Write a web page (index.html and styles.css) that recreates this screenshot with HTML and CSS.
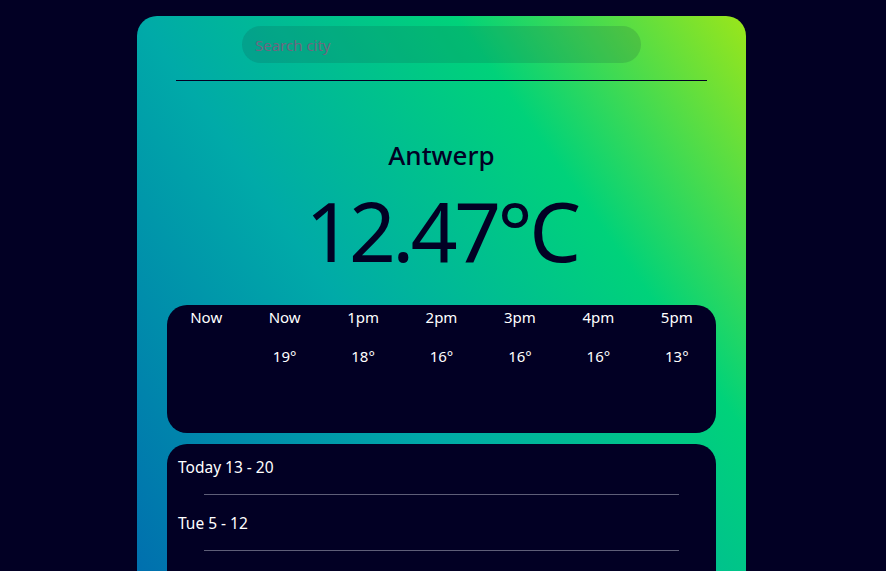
FILE: index.html
```html
<!DOCTYPE html>
<html>
<head>
<meta charset="utf-8">
<link rel="stylesheet" href="styles.css">
</head>
<body>
<main class="card">
  <div class="search-wrap"><input class="search" type="text" placeholder="Search city"></div>
  <hr class="divider">
  <section class="current">
    <h1 class="city">Antwerp</h1>
    <div class="temp">12.47°C</div>
  </section>
  <section class="hourly">
    <div class="hour"><span class="h-label">Now</span><span class="h-temp"></span></div>
    <div class="hour"><span class="h-label">Now</span><span class="h-temp">19°</span></div>
    <div class="hour"><span class="h-label">1pm</span><span class="h-temp">18°</span></div>
    <div class="hour"><span class="h-label">2pm</span><span class="h-temp">16°</span></div>
    <div class="hour"><span class="h-label">3pm</span><span class="h-temp">16°</span></div>
    <div class="hour"><span class="h-label">4pm</span><span class="h-temp">16°</span></div>
    <div class="hour"><span class="h-label">5pm</span><span class="h-temp">13°</span></div>
  </section>
  <section class="daily">
    <div class="day">Today 13 - 20</div>
    <hr class="day-sep">
    <div class="day">Tue 5 - 12</div>
    <hr class="day-sep">
  </section>
</main>
</body>
</html>
```
FILE: styles.css
```css
html, body { margin: 0; padding: 0; }
body {
  background: #020024;
  font-family: "Noto Sans", "Open Sans", sans-serif;
  height: 571px;
  overflow: hidden;
}
.card {
  width: 609px;
  margin: 16px 0 0 137px;
  height: 800px;
  border-radius: 20px;
  background: linear-gradient(55deg, #0070ae 15%, #00aaa8 48%, #00d27a 75%, #9be61a 100%);
  padding: 10px 30px 0;
  box-sizing: border-box;
}
.search-wrap { display: flex; justify-content: center; }
.search {
  width: 399px;
  height: 37px;
  border: none;
  border-radius: 19px;
  background: rgba(20, 60, 60, 0.16);
  padding: 0 13px;
  box-sizing: border-box;
  font-family: inherit;
  font-size: 15px;
  color: #6a5a7a;
  outline: none;
}
.search::placeholder { color: #7b6080; opacity: 0.9; }
.divider {
  margin: 17px 9px 0;
  border: none;
  border-top: 1px solid #020024;
  height: 0;
}
.current { text-align: center; color: #020024; padding-top: 56px; }
.city { margin: 0; font-size: 26px; font-weight: 500; line-height: 36px; }
.temp { font-size: 82px; line-height: 100px; margin-top: 7px; letter-spacing: -3.5px; }
.hourly {
  margin-top: 25px;
  height: 128px;
  background: #020024;
  border-radius: 20px;
  display: grid;
  grid-template-columns: repeat(7, 1fr);
  color: #fff;
  font-size: 15px;
}
.hour { display: flex; flex-direction: column; align-items: center; padding-top: 1px; }
.h-label { line-height: 22px; }
.h-temp { line-height: 22px; margin-top: 17px; }
.daily {
  margin-top: 11px;
  background: #020024;
  border-radius: 20px;
  color: #fff;
  font-size: 15.5px;
  padding: 11px 11px 20px;
  min-height: 200px;
}
.day { line-height: 24px; }
.day-sep {
  margin: 15px 26px 16px;
  border: none;
  border-top: 1px solid #5e5e78;
  height: 0;
}
```
